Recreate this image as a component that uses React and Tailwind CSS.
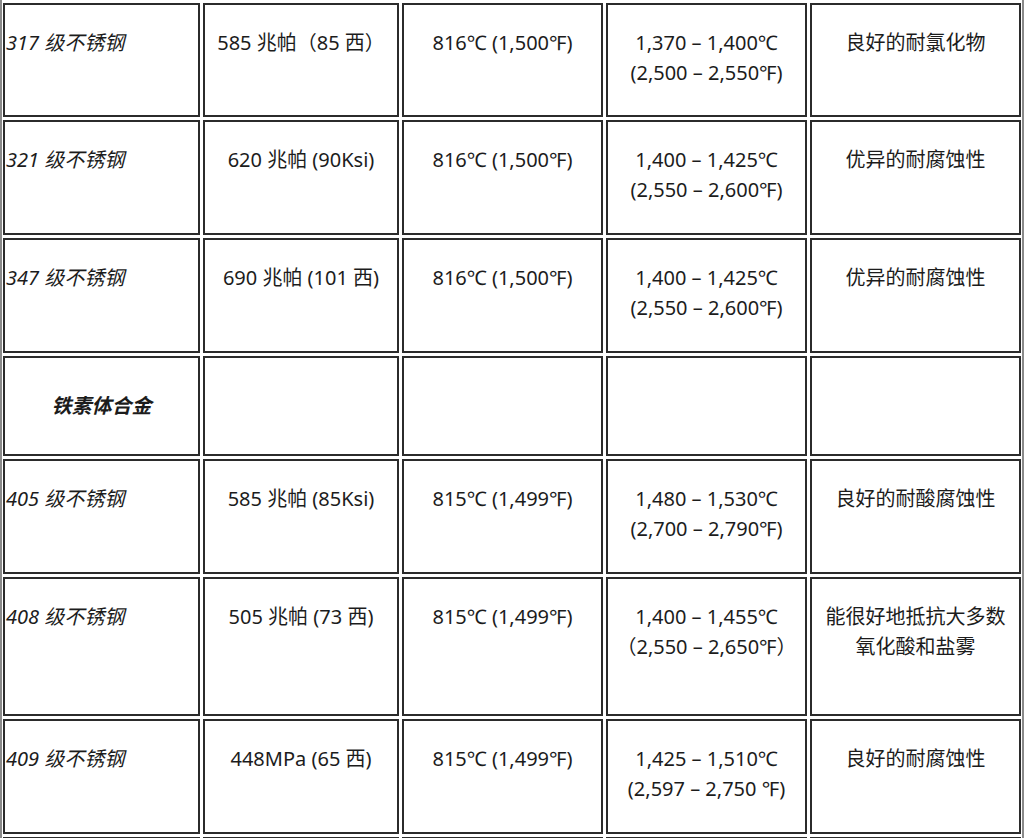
const rows = [
  {
    h: "h-[114px]",
    cells: ["317 级不锈钢", "585 兆帕（85 西）", "816℃ (1,500℉)", ["1,370 – 1,400℃", "(2,500 – 2,550℉)"], "良好的耐氯化物"],
  },
  {
    h: "h-[115px]",
    cells: ["321 级不锈钢", "620 兆帕 (90Ksi)", "816℃ (1,500℉)", ["1,400 – 1,425℃", "(2,550 – 2,600℉)"], "优异的耐腐蚀性"],
  },
  {
    h: "h-[115px]",
    cells: ["347 级不锈钢", "690 兆帕 (101 西)", "816℃ (1,500℉)", ["1,400 – 1,425℃", "(2,550 – 2,600℉)"], "优异的耐腐蚀性"],
  },
  { h: "h-[100px]", heading: "铁素体合金" },
  {
    h: "h-[115px]",
    cells: ["405 级不锈钢", "585 兆帕 (85Ksi)", "815℃ (1,499℉)", ["1,480 – 1,530℃", "(2,700 – 2,790℉)"], "良好的耐酸腐蚀性"],
  },
  {
    h: "h-[139px]",
    cells: ["408 级不锈钢", "505 兆帕 (73 西)", "815℃ (1,499℉)", ["1,400 – 1,455℃", "（2,550 – 2,650℉）"], "能很好地抵抗大多数氧化酸和盐雾"],
  },
  {
    h: "h-[115px]",
    cells: ["409 级不锈钢", "448MPa (65 西)", "815℃ (1,499℉)", ["1,425 – 1,510℃", "(2,597 – 2,750 ℉)"], "良好的耐腐蚀性"],
  },
  { h: "h-[115px]", cells: ["", "", "", "", ""] },
];

const cellBase = "border-2 border-[#2b2b2b] bg-white";

function Row({ row }) {
  if (row.heading) {
    return (
      <>
        <div className={`${row.h} ${cellBase} flex items-center justify-center font-bold italic`}>
          {row.heading}
        </div>
        <div className={`${row.h} ${cellBase}`} />
        <div className={`${row.h} ${cellBase}`} />
        <div className={`${row.h} ${cellBase}`} />
        <div className={`${row.h} ${cellBase}`} />
      </>
    );
  }
  return (
    <>
      {row.cells.map((c, i) => (
        <div
          key={i}
          className={`${row.h} ${cellBase} pt-[23px] ${i === 0 ? "pl-[1px] italic text-left" : "px-2 text-center"}`}
        >
          {Array.isArray(c) ? c.map((l, j) => <div key={j}>{l}</div>) : c}
        </div>
      ))}
    </>
  );
}

export default function App() {
  return (
    <div className="h-[838px] w-[1024px] overflow-hidden bg-white">
      <div
        className="border-x-2 border-[#8a8a8a] pl-[1px] pt-[3px] text-[20px] leading-[30px] text-[#1c1c1c]"
        style={{ fontFamily: '"Noto Sans", "Noto Sans CJK SC", sans-serif' }}
      >
        <div className="grid grid-cols-[197px_196px_201px_201px_211px] gap-[3px]">
          {rows.map((r, i) => (
            <Row key={i} row={r} />
          ))}
        </div>
      </div>
    </div>
  );
}
